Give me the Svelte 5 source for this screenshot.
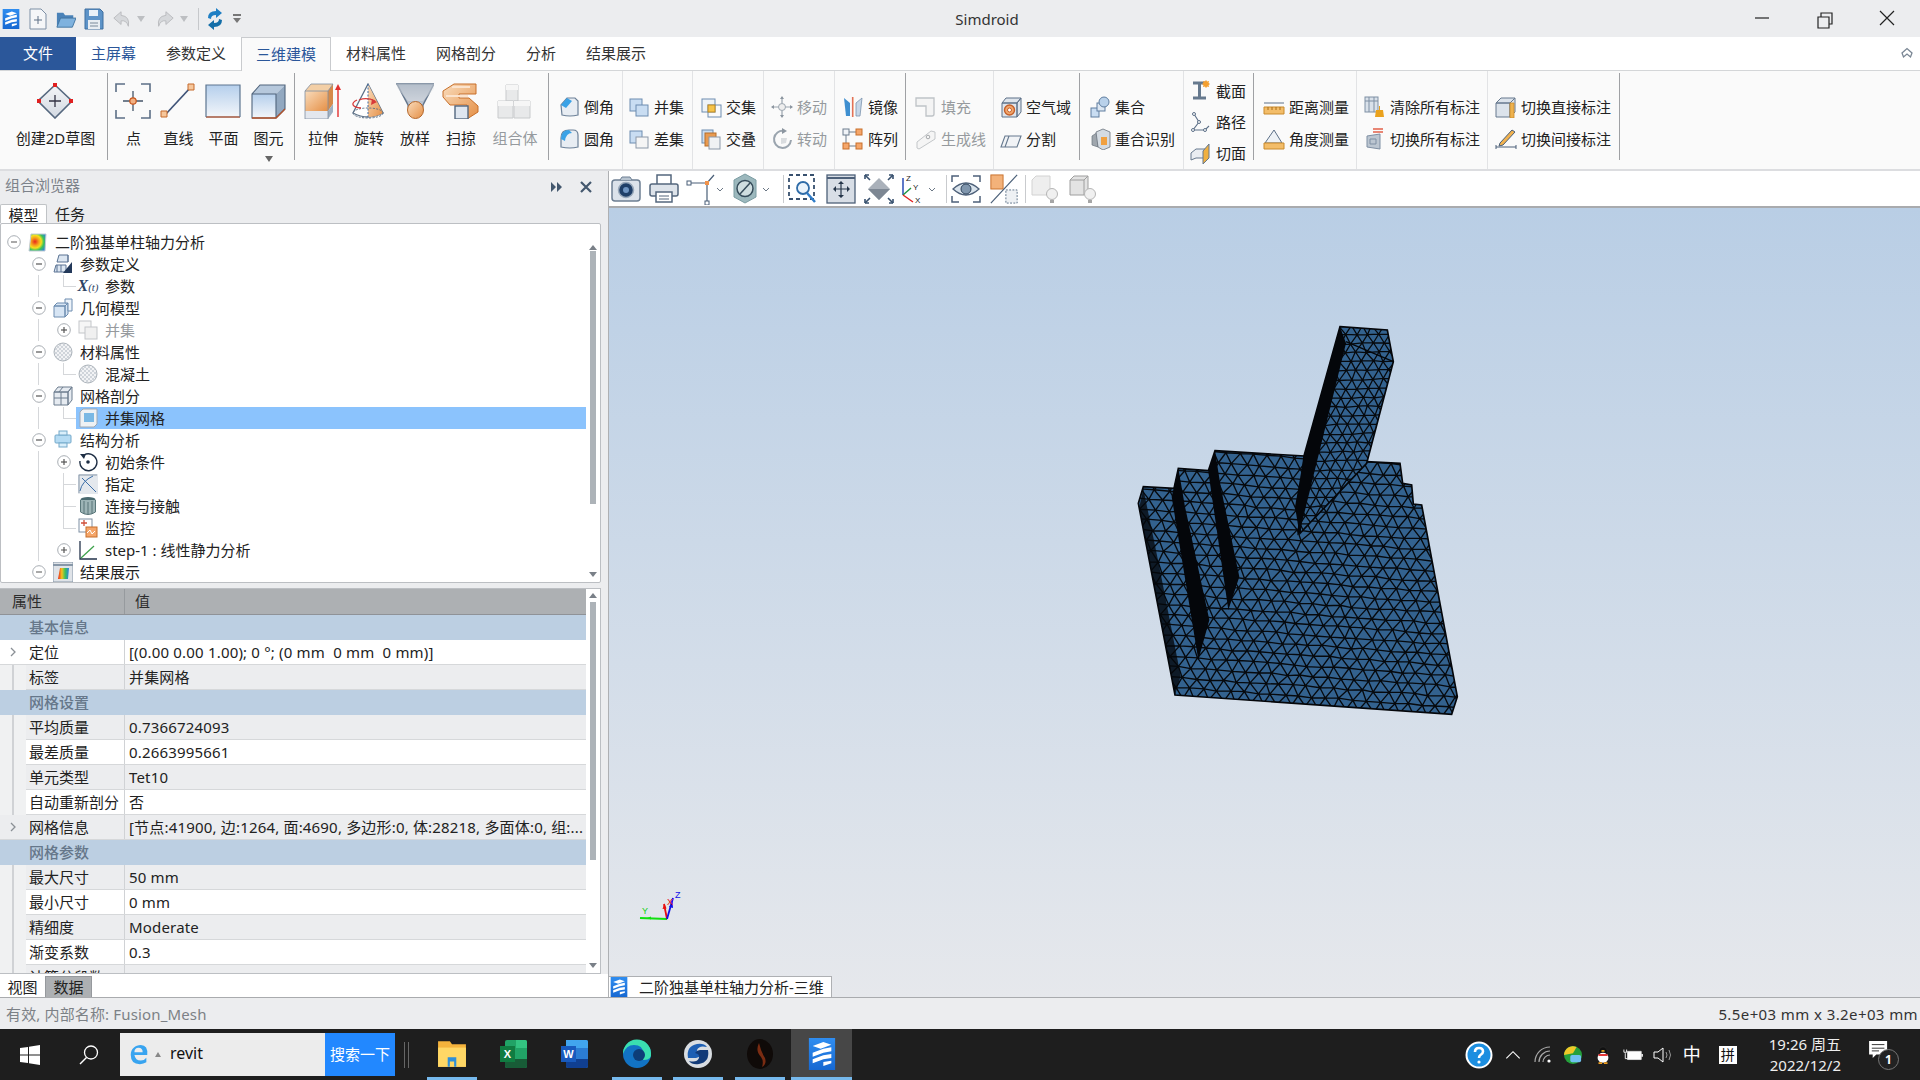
<script lang="ts">
  // large ribbon icons, 36x36
  const icons: Record<string, string> = {
    sketch: `<path d="M18 2 35 18 18 35 1 18Z" fill="url(#gSilver)" stroke="#56687f" stroke-width="1.6"/><path d="M18 12v12M12 18h12" stroke="#334" stroke-width="1.3"/><path d="M16 0h4v4h-4zM0 16h4v4H0zM32 16h4v4h-4z" fill="#e02020"/>`,
    point: `<path d="M1 9V1h9M26 1h9v8M35 27v8h-9M10 35H1v-8" fill="none" stroke="#5c6f86" stroke-width="1.6"/><path d="M18 8v20M8 18h20" stroke="#46566a" stroke-width="1.3"/><circle cx="18" cy="18" r="3.2" fill="#f2b183" stroke="#c8561c" stroke-width="1.2"/>`,
    line: `<path d="M5 32 31 4" stroke="#3f5378" stroke-width="1.7"/><path d="M1 28h6v6H1zM28 1h6v6h-6z" fill="#f6c79c" stroke="#c56a2c"/>`,
    plane: `<rect x="1" y="2" width="34" height="32" fill="url(#gPlane)"/><path d="M35 34H1" stroke="#a0553c" stroke-width="1.6"/><path d="M1 34V2h34v32" fill="none" stroke="#5c7590" stroke-width="1.2"/>`,
    prim: `<path d="M2 11h24v24H2z" fill="url(#gPlane)"/><path d="M2 11 10 2h25l-9 9z" fill="#b6c8dc"/><path d="M26 11 35 2v24l-9 9z" fill="#92a8c0"/><path d="M2 35V11L10 2h25v24l-9 9zM2 11h24v24" fill="none" stroke="#50647c" stroke-width="1.1"/><path d="M2 35h24l9-9" fill="none" stroke="#b2512a" stroke-width="1.4"/>`,
    extrude: `<path d="M1 8h23v20H1z" fill="url(#gOrange)"/><path d="M1 8 7 1h22l-5 7z" fill="#f3cfa6"/><path d="M24 8 29 1v20l-5 7z" fill="#d68a4a"/><path d="M1 28h23v8H1z" fill="#e3e7ee"/><path d="M24 28l5-7v8l-5 7z" fill="#9fb0c2"/><path d="M1 8h23v28H1zM24 8l5-7H7L1 8" fill="none" stroke="#7f8da0" stroke-width=".8"/><path d="M34 34V4" stroke="#e23030" stroke-width="1.4"/><path d="M34 1l-3 6h6z" fill="#e23030"/>`,
    revolve: `<path d="M18 1 3 30q15 8 30 0z" fill="#fff" stroke="#5c7086" stroke-width="1.3"/><path d="M18 1 33 30q-7 4-15 4z" fill="url(#gOrange)"/><path d="M18 1v33" stroke="#3a6aa5" stroke-width="1" stroke-dasharray="2 1.5"/><ellipse cx="18" cy="30" rx="15" ry="5" fill="none" stroke="#5c7086" stroke-dasharray="2 1.4"/><path d="M7 17c-6 3-6 7 4 8" fill="none" stroke="#d83a3a" stroke-width="1.3"/><path d="M9 17q8-3 16 1" fill="none" stroke="#d83a3a" stroke-width="1.3"/><path d="M27 19l-6 3 1-6z" fill="#d83a3a"/>`,
    loft: `<path d="M1 1h37L27 22a7 8 0 0 1-15 0z" fill="url(#gFunnel)" stroke="#66788e" stroke-width="1.5"/><path d="M1 1h37v5L27 18H12L1 5z" fill="#e6e8ec" opacity=".45"/><ellipse cx="19.500" cy="27" rx="8" ry="8.500" fill="url(#gOrange)" stroke="#b5682c"/>`,
    sweep: `<path d="M12 1h22v10H17v4h10l9 8v6l-11 7V22H8L1 14V8z" fill="url(#gOrange)" stroke="#c76f2a"/><path d="M4 13h22M10 4h18" stroke="#fbe3cd" stroke-width="2"/><rect x="13" y="23" width="13" height="13" fill="#dfe6ef" stroke="#53677f" stroke-width="1.4"/>`,
    combo: `<path d="M2 18h15v17H2zM10 2h12v16H10zM18 18h16v17H18z" fill="#e8e9ea" stroke="#c8cacc"/><path d="M10 2h12v5H10zM2 18h15v5H2zM18 18h16v5H18z" fill="#f6f6f6"/>`,
  };

  // small ribbon icons, 22x22
  const sIcons: Record<string, string> = {
    chamfer: `<path d="M3 9 9 2h8l3 3v14q-8 2-16 0z" fill="#e8edf3" stroke="#6c8098" stroke-width="1.2"/><path d="M3 9 9 2l5 3-6 7z" fill="#3ba2e6"/>`,
    fillet: `<path d="M3 19V10q0-8 8-8h4q5 0 5 5v12q-8 2-17 0z" fill="#e8edf3" stroke="#6c8098" stroke-width="1.2"/><path d="M3 11Q3 2 11 2l3 3q-6 0-7 8z" fill="#3ba2e6"/>`,
    union: `<rect x="2" y="3" width="12" height="12" fill="#c9ddf2" stroke="#6c8cb0"/><rect x="8" y="9" width="12" height="11" fill="#c9ddf2" stroke="#6c8cb0"/>`,
    diff: `<rect x="2" y="3" width="12" height="12" fill="#c9ddf2" stroke="#6c8cb0"/><rect x="8" y="9" width="12" height="11" fill="#f5f5f5" stroke="#8b98a8"/>`,
    inter: `<rect x="2" y="3" width="13" height="13" fill="#eef3f8" stroke="#6c8cb0"/><rect x="8" y="9" width="13" height="12" fill="none" stroke="#6c8cb0"/><rect x="8" y="9" width="7" height="7" fill="#f6c44a" stroke="#c08a1f"/>`,
    overlap: `<rect x="2" y="2" width="11" height="13" fill="#c9ddf2" stroke="#6c8cb0"/><rect x="5" y="5" width="11" height="13" fill="#e89a50" stroke="#b86e28"/><rect x="9" y="9" width="11" height="12" fill="#f0f2f4" stroke="#8b98a8"/>`,
    move: `<circle cx="11" cy="11" r="3.500" fill="#eee" stroke="#9aa4ae"/><path d="M11 1v6M11 15v6M1 11h6M15 11h6" stroke="#9aa4ae" stroke-width="1.2"/><path d="M11 0l-2 3h4zM11 22l-2-3h4zM0 11l3-2v4zM22 11l-3-2v4z" fill="#8c96a0"/>`,
    rotate: `<path d="M13 3a8.500 8.500 0 1 0 7 9" fill="none" stroke="#9aa4ae" stroke-width="2"/><path d="M11 0l5 3-5 3z" fill="#8c96a0"/><path d="M10 10h6l-1 5-5 1z" fill="#d9dcdf"/>`,
    mirror: `<path d="M2 2l6 5v13H4z" fill="#3f8fd0"/><path d="M20 2l-6 5v13h4z" fill="#c7d7e8" stroke="#7b93ad" stroke-width=".8"/><path d="M10.500 1v20" stroke="#e0705a" stroke-width="1.2"/><path d="M11.500 1v20" stroke="#f2b89e"/>`,
    array: `<path d="M5 4h12M4 5v12M5 18h12" stroke="#6d7c8d"/><rect x="1" y="1" width="6" height="6" fill="#f0f3f7" stroke="#6d7c8d"/><rect x="14" y="1" width="6" height="6" fill="#f5a66a" stroke="#c76f2a"/><rect x="1" y="15" width="6" height="6" fill="#f5a66a" stroke="#c76f2a"/><rect x="14" y="15" width="6" height="6" fill="#f5a66a" stroke="#c76f2a"/>`,
    fillShape: `<path d="M1 2h18v16a2 2 0 0 1-2 2h-6V10H1z" fill="#f4f4f4" stroke="#bfc3c7" stroke-width="1.3"/>`,
    genline: `<path d="M2 14 16 3l4 1v7L4 21l-2-1z" fill="#f5f5f5" stroke="#c3c6c9"/><circle cx="13" cy="9" r="1.800" fill="none" stroke="#a5a8ab"/>`,
    air: `<path d="M2 7h15v14H2zM2 7l4-5h15l-4 5zM17 7l4-5v14l-4 5z" fill="#dfe5ec" stroke="#5d7088"/><circle cx="9.500" cy="14" r="5" fill="#f2a66c" stroke="#c4602a" stroke-width="1.4"/><circle cx="9.500" cy="14" r="2" fill="#fff" stroke="#c4602a"/>`,
    split: `<path d="M1 19 5 8h16l-4 11zM9 8 5 19" fill="#f1f3f6" stroke="#66798e" stroke-width="1.1"/>`,
    set: `<rect x="2" y="12" width="8" height="9" fill="#c9ddf2" stroke="#5f7d9f"/><rect x="8" y="7" width="8" height="8" fill="#dde7f2" stroke="#5f7d9f"/><circle cx="15" cy="6" r="5" fill="#b9d1ea" stroke="#5f7d9f"/>`,
    coincide: `<path d="M3 8 9 4v15l-6-2z" fill="#9fa6ad" stroke="#69727c" stroke-width=".7"/><path d="M7 4l7-3 7 3v15l-7 3-5-3z" fill="#d4dbe2" stroke="#69727c" stroke-width=".8"/><path d="M12 9h6v8h-6z" fill="#f0a040"/>`,
    section: `<path d="M3 3h13M3 18h13M9.500 3v15" stroke="#66798e" stroke-width="3"/><circle cx="16" cy="4" r="3" fill="#f4a030"/><path d="M16 0v8M12 4h8M13 1l6 6M19 1l-6 6" stroke="#f4a030" stroke-width=".8"/>`,
    path: `<path d="M4 3l5 8-6 8h12l4-4" fill="none" stroke="#5d7088" stroke-width="1.1"/><g fill="#fff" stroke="#5d7088"><circle cx="4" cy="3" r="1.500"/><circle cx="9" cy="11" r="1.500"/><circle cx="3" cy="19" r="1.500"/><circle cx="15" cy="19" r="1.500"/></g>`,
    cut: `<path d="M1 11l5-4h9v9H6l-5 2z" fill="#e9edf2" stroke="#66798e"/><path d="M13 9l6-7v14l-6 6z" fill="#f0b040" stroke="#66798e"/>`,
    dist: `<path d="M1 7h20" stroke="#5d7088"/><path d="M1 11h20v7H1z" fill="#f3bd69" stroke="#c98a2c"/><path d="M5 11v3M9 11v3M13 11v3M17 11v3" stroke="#a86c18"/>`,
    angle: `<path d="M2 15 11 2l8 13z" fill="#eef2f6" stroke="#5d7088"/><path d="M1 15h20v6H1z" fill="#f3bd69" stroke="#c98a2c"/>`,
    clear: `<rect x="1" y="1" width="13" height="15" fill="#d9e1ea" stroke="#7e8fa3"/><path d="M1 5h13M5 1v15M10 1v15" stroke="#7e8fa3"/><path d="M15 10v4h-3l-1 7h9l-1-7h-3v-4z" fill="#eaa21e"/>`,
    toggleAll: `<path d="M3 8l13-2v15l-13-2z" fill="#bcc6d1" stroke="#7e8fa3"/><path d="M6 11h6v5H6z" fill="none" stroke="#7e8fa3"/><path d="M9 1h10M19 4H9" stroke="#e2604a" stroke-width="1.3"/>`,
    toggleDirect: `<path d="M1 7h14v14H1zM1 7l5-5h14l-5 5zM15 7l5-5v14l-5 5z" fill="#dce3eb" stroke="#66798e"/><path d="M15 7h4v15h-4z" fill="#eeb24e" stroke="#c98a2c" stroke-width=".8"/>`,
    toggleIndirect: `<path d="M5 15 17 2l3 2L8 17l-4 1z" fill="#f2b24e" stroke="#4a5f78"/><path d="M1 17v4M21 17v4M1 19h20" stroke="#4a5f78"/>`,
  };

  // tree icons, 20x20
  const tIcons: Record<string, string> = {
    study: `<path d="M3 2h15l-1 17H1z" fill="url(#gStudy)"/><path d="M3 2h15l-1 17H1z" fill="none" stroke="#c3cbd4"/>`,
    params: `<path d="M4 8 6 1h9v7zM1 18l2-7h10v7zM15 1v7" fill="#dce6f1" stroke="#5a7393"/><path d="M4 11v7M8 11v7" stroke="#5a7393"/><path d="M19 8v11h-9z" fill="#23395a"/>`,
    geo: `<path d="M1 8h11v11H1zM1 8l3-3h11l-3 3zM12 8l3-3v11l-3 3z" fill="#d7e5f4" stroke="#6c8cb0"/><path d="M12 1h7v12h-4V5h-3z" fill="#edf3f9" stroke="#6c8cb0"/>`,
    uni: `<rect x="1" y="1" width="12" height="12" fill="#f6f6f6" stroke="#c3c6c9"/><rect x="7" y="7" width="12" height="12" fill="#f0f0f0" stroke="#c3c6c9"/>`,
    mat: `<circle cx="10" cy="10" r="9" fill="url(#pDots)" stroke="#aeb5bc"/>`,
    mesh: `<path d="M1 6h14v13H1zM1 6l4-5h14l-4 5zM15 6l4-5v13l-4 5zM8 6v13M1 12h14M10 1 6 6" fill="#e6ebf1" stroke="#6c7c8e"/>`,
    unimesh: `<path d="M2 4 5 1h14v15l-3 3H2z" fill="#eef1f4" stroke="#9fa8b3"/><rect x="6" y="5" width="10" height="9" fill="#7ab8e4"/>`,
    struct: `<rect x="2" y="5" width="16" height="8" rx="1" fill="#b5dbf3" stroke="#74a9ca"/><rect x="6" y="1" width="8" height="4" fill="#d9eefa" stroke="#74a9ca"/><rect x="6" y="13" width="8" height="4" fill="#d9eefa" stroke="#74a9ca"/>`,
    init: `<path d="M6 3a8.500 8.500 0 1 1-4 6" fill="none" stroke="#1e2e44" stroke-width="1.4"/><path d="M2 2l6 0-2 5z" fill="#1e2e44"/><circle cx="10" cy="10" r="1.800" fill="#1e2e44"/>`,
    assign: `<rect x="0" y="0" width="20" height="20" fill="#e4e8ed"/><path d="M1 1h18M1 1v18" stroke="#8797a8"/><path d="M2 17Q4 7 15 2M4 4l14 14" fill="none" stroke="#3d6fa8"/>`,
    conn: `<ellipse cx="10" cy="3.500" rx="7.500" ry="2.500" fill="#4a6a70"/><path d="M2.500 4v12q7.500 5 15 0V4" fill="#9db4b6" stroke="#5a777a"/><path d="M6 5v13M10 6v13M14 5v13" stroke="#597578"/>`,
    monitor: `<rect x="1" y="1" width="13" height="13" fill="#fff" stroke="#7e8fa3"/><path d="M3 5h6M6 2v6" stroke="#d0503a" stroke-width="1.3"/><rect x="8" y="9" width="11" height="10" fill="#f5a66a" stroke="#c76f2a"/><path d="M9 15l3-3 2 4 3-3" fill="none" stroke="#fff"/>`,
    step: `<path d="M2 1v18h17" fill="none" stroke="#22324a" stroke-width="1.3"/><path d="M3 18 16 6" stroke="#3ca14a" stroke-width="1.2"/>`,
    result: `<rect x="0" y="0" width="20" height="20" fill="#dfe3e8" stroke="#8797a8"/><path d="M0 3h20" stroke="#8797a8" stroke-width="2"/><path d="M7 6h9l-1 11H5z" fill="url(#gHeat)"/>`,
  };

  type RItem = { label: string; icon: string; off?: boolean };
  type RGroup = { w: number; kind: string; pad: number; dark?: boolean; items: RItem[] };

  const ribbon: RGroup[] = [
    { w: 108, kind: "big", pad: 3, dark: true, items: [{ label: "创建2D草图", icon: "sketch" }] },
    { w: 187, kind: "big", pad: 3, dark: true, items: [
      { label: "点", icon: "point" }, { label: "直线", icon: "line" },
      { label: "平面", icon: "plane" }, { label: "图元", icon: "prim" } ] },
    { w: 254, kind: "big five", pad: 5, dark: true, items: [
      { label: "拉伸", icon: "extrude" }, { label: "旋转", icon: "revolve" }, { label: "放样", icon: "loft" },
      { label: "扫掠", icon: "sweep" }, { label: "组合体", icon: "combo", off: true } ] },
    { w: 74, kind: "two", pad: 9, items: [{ label: "倒角", icon: "chamfer" }, { label: "圆角", icon: "fillet" }] },
    { w: 70, kind: "two", pad: 5, items: [{ label: "并集", icon: "union" }, { label: "差集", icon: "diff" }] },
    { w: 71, kind: "two", pad: 7, items: [{ label: "交集", icon: "inter" }, { label: "交叠", icon: "overlap" }] },
    { w: 71, kind: "two", pad: 7, items: [{ label: "移动", icon: "move", off: true }, { label: "转动", icon: "rotate", off: true }] },
    { w: 71, kind: "two", pad: 7, dark: true, items: [{ label: "镜像", icon: "mirror" }, { label: "阵列", icon: "array" }] },
    { w: 88, kind: "two", pad: 9, items: [{ label: "填充", icon: "fillShape", off: true }, { label: "生成线", icon: "genline", off: true }] },
    { w: 86, kind: "two", pad: 6, dark: true, items: [{ label: "空气域", icon: "air" }, { label: "分割", icon: "split" }] },
    { w: 104, kind: "two", pad: 9, items: [{ label: "集合", icon: "set" }, { label: "重合识别", icon: "coincide" }] },
    { w: 70, kind: "three", pad: 6, dark: true, items: [{ label: "截面", icon: "section" }, { label: "路径", icon: "path" }, { label: "切面", icon: "cut" }] },
    { w: 103, kind: "two", pad: 9, items: [{ label: "距离测量", icon: "dist" }, { label: "角度测量", icon: "angle" }] },
    { w: 131, kind: "two", pad: 7, items: [{ label: "清除所有标注", icon: "clear" }, { label: "切换所有标注", icon: "toggleAll" }] },
    { w: 132, kind: "two", pad: 7, dark: true, items: [{ label: "切换直接标注", icon: "toggleDirect" }, { label: "切换间接标注", icon: "toggleIndirect" }] },
  ];

  const tabs = ["主屏幕", "参数定义", "三维建模", "材料属性", "网格剖分", "分析", "结果展示"];

  type TreeRow = { cells: string[]; icon: string; label: string; off?: boolean; sel?: boolean };
  const tree: TreeRow[] = [
    { cells: ["minus"], icon: "study", label: "二阶独基单柱轴力分析" },
    { cells: ["", "minus"], icon: "params", label: "参数定义" },
    { cells: ["", "bar", "l"], icon: "xt", label: "参数" },
    { cells: ["", "minus"], icon: "geo", label: "几何模型" },
    { cells: ["", "bar", "plus"], icon: "uni", label: "并集", off: true },
    { cells: ["", "minus"], icon: "mat", label: "材料属性" },
    { cells: ["", "bar", "l"], icon: "mat", label: "混凝土" },
    { cells: ["", "minus"], icon: "mesh", label: "网格剖分" },
    { cells: ["", "bar", "l"], icon: "unimesh", label: "并集网格", sel: true },
    { cells: ["", "minus"], icon: "struct", label: "结构分析" },
    { cells: ["", "bar", "plus"], icon: "init", label: "初始条件" },
    { cells: ["", "bar", "t"], icon: "assign", label: "指定" },
    { cells: ["", "bar", "t"], icon: "conn", label: "连接与接触" },
    { cells: ["", "bar", "l"], icon: "monitor", label: "监控" },
    { cells: ["", "bar", "plus"], icon: "step", label: "step-1 : 线性静力分析" },
    { cells: ["", "minus"], icon: "result", label: "结果展示" },
  ];

  type Prop = { k: string; v?: string; section?: boolean; alt?: boolean; arrow?: boolean };
  const props: Prop[] = [
    { k: "基本信息", section: true },
    { k: "定位", v: "[(0.00 0.00 1.00); 0 °; (0 mm  0 mm  0 mm)]", arrow: true },
    { k: "标签", v: "并集网格", alt: true },
    { k: "网格设置", section: true },
    { k: "平均质量", v: "0.7366724093", alt: true },
    { k: "最差质量", v: "0.2663995661" },
    { k: "单元类型", v: "Tet10", alt: true },
    { k: "自动重新剖分", v: "否" },
    { k: "网格信息", v: "[节点:41900, 边:1264, 面:4690, 多边形:0, 体:28218, 多面体:0, 组:...", alt: true, arrow: true },
    { k: "网格参数", section: true },
    { k: "最大尺寸", v: "50 mm", alt: true },
    { k: "最小尺寸", v: "0 mm" },
    { k: "精细度", v: "Moderate", alt: true },
    { k: "渐变系数", v: "0.3" },
    { k: "计算分段数", v: "1", alt: true },
  ];

  // jittered triangle grid, in the zoomed-up units of the mesh picture
  function meshPath(w: number, h: number, rot: number, cx: number, cy: number, span: number): string {
    let seed = 17;
    const rnd = () => {
      seed = (seed * 16807) % 2147483647;
      return seed / 2147483647 - 0.5;
    };
    const c = Math.cos(rot);
    const s = Math.sin(rot);
    const nx = Math.ceil(span / w);
    const ny = Math.ceil(span / h);
    const pts: [number, number][][] = [];
    for (let j = -ny; j <= ny; j++) {
      const row: [number, number][] = [];
      for (let i = -nx; i <= nx; i++) {
        const u = i * w + (j % 2 ? w / 2 : 0) + rnd() * w * 0.24;
        const v = j * h + rnd() * h * 0.18;
        row.push([cx + u * c - v * s, cy + u * s + v * c]);
      }
      pts.push(row);
    }
    const f = (p: [number, number]) => `${p[0].toFixed(1)} ${p[1].toFixed(1)}`;
    let d = "";
    for (let j = 0; j < pts.length; j++) {
      for (let i = 0; i < pts[j].length; i++) {
        const p = pts[j][i];
        if (i + 1 < pts[j].length) d += `M${f(p)}L${f(pts[j][i + 1])}`;
        if (j + 1 < pts.length) {
          const odd = (j - ny) % 2 !== 0;
          d += `M${f(p)}L${f(pts[j + 1][i])}`;
          const other = odd ? i + 1 : i - 1;
          if (other >= 0 && other < pts[j].length) d += `M${f(p)}L${f(pts[j + 1][other])}`;
        }
      }
    }
    return d;
  }

  const baseShape =
    "345,452 612,468 595,700 800,485 900,490 908,550 935,555 940,612 965,615 1072,1190 1055,1243 225,1185 115,610 130,560 222,565 235,505 325,512";
  const columnShape = "720,80 862,90 880,185 800,490 600,700 612,468";
  const baseMesh = meshPath(41, 31, 0.07, 640, 850, 800);
  const columnMesh = meshPath(33, 27, -0.02, 790, 400, 420);
</script>

{#snippet big(name: string)}
  <svg class="ic36" viewBox="0 0 38 36">{@html icons[name]}</svg>
{/snippet}

{#snippet expander(kind: string)}
  <svg class="exp" viewBox="0 0 14 14">
    <circle cx="7" cy="7" r="6.300" fill="#fff" stroke="#a8adb3" />
    <path d="M4 7h6" stroke="#555" stroke-width="1.200" />
    {#if kind === "plus"}<path d="M7 4v6" stroke="#555" stroke-width="1.200" />{/if}
  </svg>
{/snippet}

<svg class="defs" aria-hidden="true">
  <defs>
    <linearGradient id="gSilver" x1="0" y1="0" x2="0" y2="1"><stop offset="0" stop-color="#f4f5f7" /><stop offset="1" stop-color="#d3d9e2" /></linearGradient>
    <linearGradient id="gPlane" x1="0" y1="0" x2="0" y2="1"><stop offset="0" stop-color="#b5cfec" /><stop offset="1" stop-color="#f3f6fa" /></linearGradient>
    <linearGradient id="gOrange" x1="0" y1="0" x2="1" y2="1"><stop offset="0" stop-color="#f9dcbc" /><stop offset="1" stop-color="#e58f45" /></linearGradient>
    <linearGradient id="gFunnel" x1="0" y1="0" x2="0" y2="1"><stop offset="0" stop-color="#8b9bb0" /><stop offset="1" stop-color="#d5dae1" /></linearGradient>
    <linearGradient id="gHeat" x1="0" y1="0" x2="1" y2="0"><stop offset="0" stop-color="#e8261c" /><stop offset=".35" stop-color="#f5c21c" /><stop offset=".65" stop-color="#3cc25a" /><stop offset="1" stop-color="#2a7fe0" /></linearGradient>
    <radialGradient id="gStudy" cx=".35" cy=".45" r=".75"><stop offset="0" stop-color="#e8261c" /><stop offset=".3" stop-color="#f5a01c" /><stop offset=".5" stop-color="#f5e01c" /><stop offset=".7" stop-color="#3cc25a" /><stop offset="1" stop-color="#2a7fe0" /></radialGradient>
    <linearGradient id="gApp" x1="0" y1="0" x2="0" y2="1"><stop offset="0" stop-color="#2f8df0" /><stop offset="1" stop-color="#1668d2" /></linearGradient>
    <pattern id="pDots" width="4" height="4" patternUnits="userSpaceOnUse"><rect width="4" height="4" fill="#f2f3f5" /><circle cx="1" cy="1" r="1" fill="#c4cad1" /><circle cx="3" cy="3" r="1" fill="#c4cad1" /></pattern>
    <symbol id="appLogo" viewBox="0 0 20 24">
      <rect width="20" height="24" fill="url(#gApp)" />
      <path d="M3 6 11 3l6 2-8 3zM3 11l8-3v3l-8 3zM3 16l8-3v3l-8 3zM11 8l6-1v3l-6 1zM11 13l6-1v3l-6 1zM11 18l6-1v2l-6 2z" fill="#fff" />
    </symbol>
  </defs>
</svg>

<div class="app">
  <header class="titlebar">
    <div class="qat">
      <svg class="logo" viewBox="0 0 20 20"><use href="#appLogo" /></svg>
      <svg class="qi" viewBox="0 0 20 22"><path d="M2 1h11l5 5v15H2z" fill="#f5f6f8" stroke="#7d8fa5" /><path d="M10 8v8M6 12h8" stroke="#5d6f85" /></svg>
      <svg class="qi" viewBox="0 0 22 22"><path d="M1 4h7l2 3h9v3H6L1 20z" fill="#4a82b8" /><path d="M5 10h17l-4 10H1z" fill="#7fb2de" stroke="#3f739f" /></svg>
      <svg class="qi" viewBox="0 0 20 22"><path d="M1 1h15l3 3v17H1z" fill="#5d93c8" stroke="#3f6f9f" /><rect x="5" y="2" width="9" height="6" fill="#e8f0f8" /><rect x="4" y="12" width="12" height="9" fill="#e8edf2" /><path d="M6 15h8M6 18h8" stroke="#7a8a9a" /></svg>
      <svg class="qi" viewBox="0 0 22 22"><path d="M10 3 2 10l8 7v-4q6-1 8 6 2-11-8-12z" fill="#d6d8db" stroke="#b8babd" /></svg>
      <span class="drop"></span>
      <svg class="qi" viewBox="0 0 22 22"><path d="M12 3l8 7-8 7v-4q-6-1-8 6-2-11 8-12z" fill="#d6d8db" stroke="#b8babd" /></svg>
      <span class="drop"></span>
      <i class="qsep"></i>
      <svg class="qi" viewBox="0 0 20 22"><path d="M3 10q0-7 8-7V0l6 5-6 5V7q-5 0-5 4z" fill="#1f7fc4" /><path d="M17 12q0 7-8 7v3l-6-5 6-5v3q5 0 5-4z" fill="#136ea8" /></svg>
      <span class="more"></span>
    </div>
    <div class="title">Simdroid</div>
    <div class="winbtns">
      <svg viewBox="0 0 63 37"><path d="M26 18h14" stroke="#222" stroke-width="1.200" /></svg>
      <svg viewBox="0 0 63 37"><path d="M26 17h11v11H26zM29 17v-4h11v11h-3" fill="none" stroke="#222" stroke-width="1.200" /></svg>
      <svg viewBox="0 0 63 37"><path d="M25 11l14 14M39 11 25 25" stroke="#222" stroke-width="1.200" /></svg>
    </div>
  </header>

  <nav class="tabbar">
    <span class="file">文件</span>
    {#each tabs as t}
      <span class="tab" class:active={t === "三维建模"} class:blue={t === "主屏幕"}>{t}</span>
    {/each}
    <svg class="collapse" viewBox="0 0 12 12"><path d="M1 6l5-4.500 5 4.500-1.500 4L6 7l-3.500 3z" fill="none" stroke="#7a8694" stroke-width="1.300" /></svg>
  </nav>

  <section class="ribbon">
    {#each ribbon as g}
      <div class="group {g.kind}" class:dark={g.dark} style="width:{g.w}px;padding-left:{g.pad}px">
        {#each g.items as it}
          {#if g.kind.startsWith("big")}
            <div class="bigitem" class:wide={it.icon === "sketch"} class:combo={it.icon === "combo"} class:off={it.off}>
              {@render big(it.icon)}
              <span>{it.label}</span>
              {#if it.icon === "prim"}<i class="caret"></i>{/if}
            </div>
          {:else}
            <div class="smallitem" class:off={it.off}>
              <svg class="ic22" viewBox="0 0 22 22">{@html sIcons[it.icon]}</svg>
              <span>{it.label}</span>
            </div>
          {/if}
        {/each}
      </div>
    {/each}
  </section>

  <div class="main">
    <aside class="left">
      <div class="panelhead">
        <span>组合浏览器</span>
        <svg class="phbtn" viewBox="0 0 14 14"><path d="M1 2l5 5-5 5zM7 2l5 5-5 5z" fill="#44586e" /></svg>
        <svg class="phbtn" viewBox="0 0 14 14"><path d="M2 2l10 10M12 2 2 12" stroke="#44586e" stroke-width="2.200" /></svg>
      </div>
      <div class="ptabs">
        <span class="ptab on">模型</span>
        <span class="ptab">任务</span>
      </div>
      <div class="treebox">
        <div class="treerows">
          {#each tree as r}
            <div class="trow">
              {#each r.cells as c}
                <span class="cell {c}">
                  {#if c === "minus" || c === "plus"}{@render expander(c)}{/if}
                </span>
              {/each}
              <div class="node" class:sel={r.sel} class:off={r.off}>
                {#if r.icon === "xt"}
                  <span class="xt"><b>X</b>(t)</span>
                {:else}
                  <svg class="ic20" viewBox="0 0 20 20">{@html tIcons[r.icon]}</svg>
                {/if}
                <span class="lbl">{r.label}</span>
              </div>
            </div>
          {/each}
        </div>
        <div class="sb tree-sb"><i class="up"></i><b></b><i class="down"></i></div>
      </div>

      <div class="propbox">
        <div class="proptable">
          <div class="phead"><span class="c1">属性</span><span class="c2">值</span></div>
          {#each props as p}
            {#if p.section}
              <div class="pr section"><span>{p.k}</span></div>
            {:else}
              <div class="pr" class:alt={p.alt}>
                <span class="gut" class:arrow={p.arrow}>
                  {#if p.arrow}<svg viewBox="0 0 8 12"><path d="M2 2l4 4-4 4" fill="none" stroke="#8a8f95" stroke-width="1.300" /></svg>{/if}
                </span>
                <span class="k">{p.k}</span>
                <span class="v">{p.v}</span>
              </div>
            {/if}
          {/each}
        </div>
        <div class="sb prop-sb"><i class="up"></i><b></b><i class="down"></i></div>
      </div>

      <div class="btabs">
        <span class="btab">视图</span>
        <span class="btab on">数据</span>
      </div>
    </aside>

    <div class="right">
      <div class="toolbar">
        <svg class="tb first" viewBox="0 0 30 26"><rect x="1" y="4" width="28" height="21" rx="3" fill="#dbe2ea" stroke="#6d7f93" stroke-width="1.500" /><path d="M9 4l2-3h8l2 3" fill="#b8c4d0" stroke="#6d7f93" /><circle cx="15" cy="14" r="7.500" fill="#1f3f68" stroke="#99a9bb" stroke-width="1.500" /><circle cx="15" cy="14" r="3" fill="#6f95c2" /></svg>
        <svg class="tb" viewBox="0 0 30 30"><path d="M8 10V1h14v9" fill="#fff" stroke="#54677d" stroke-width="1.500" /><rect x="1" y="10" width="28" height="12" rx="2" fill="#dde3ea" stroke="#54677d" stroke-width="1.500" /><path d="M7 18h16v10H7z" fill="#fff" stroke="#54677d" stroke-width="1.500" /><path d="M10 22h10M10 25h10" stroke="#54677d" /></svg>
        <svg class="tb wide" viewBox="0 0 40 32"><path d="M1 10h21M21 10v20M21 10 28 2" stroke="#4a5f78" stroke-width="1.200" /><rect x="1" y="8" width="4" height="4" fill="#fff" stroke="#4a5f78" /><rect x="19" y="28" width="4" height="4" fill="#fff" stroke="#4a5f78" /><rect x="19" y="8" width="4" height="4" fill="#f0924a" /><path d="M31 15l3 3 3-3" fill="none" stroke="#6b7785" /></svg>
        <svg class="tb wide" viewBox="0 0 40 32"><path d="M13 1l11 6v17l-11 6-11-6V7z" fill="#9cb8bd" stroke="#7b9ca2" /><circle cx="13" cy="15.500" r="8" fill="#cfdee0" stroke="#364c5a" stroke-width="1.500" /><path d="M8 21l10-11" stroke="#364c5a" stroke-width="1.500" /><path d="M31 15l3 3 3-3" fill="none" stroke="#6b7785" /></svg>
        <i class="tsep s1"></i>
        <svg class="tb" viewBox="0 0 30 30"><rect x="1" y="1" width="25" height="24" fill="none" stroke="#37506e" stroke-width="1.800" stroke-dasharray="4 3" /><circle cx="15" cy="14" r="6" fill="#eaf3fb" stroke="#2f6ca8" stroke-width="1.800" /><path d="M19 19l8 9" stroke="#2f7cc8" stroke-width="2.500" /></svg>
        <svg class="tb" viewBox="0 0 30 30"><rect x="1" y="1" width="28" height="28" fill="#d8dee6" stroke="#4d6079" stroke-width="1.300" /><path d="M1 4h28" stroke="#4d6079" stroke-width="2" /><path d="M15 9v13M9 15h13" stroke="#26364a" stroke-width="1.200" /><path d="M15 7l-3 3h6zM15 24l-3-3h6zM7 15l3-3v6zM24 15l-3-3v6z" fill="#26364a" /></svg>
        <svg class="tb" viewBox="0 0 30 30"><path d="M15 4 26 15 15 26 4 15z" fill="#aab1ba" /><path d="M4 15h22L15 26z" fill="#7d8793" /><path d="M1 1l5 5M29 1l-5 5M1 29l5-5M29 29l-5-5" stroke="#37506e" stroke-width="1.600" /><path d="M1 1h4M1 1v4M29 1h-4M29 1v4M1 29h4M1 29v-4M29 29h-4M29 29v-4" stroke="#37506e" stroke-width="1.600" /></svg>
        <svg class="tb wide axes" viewBox="0 0 40 32"><path d="M5 22V5" stroke="#1a3fb0" stroke-width="1.400" /><path d="M5 22 13 15" stroke="#1e9440" stroke-width="1.400" /><path d="M5 22l10 7" stroke="#e02020" stroke-width="1.400" /><text x="8" y="8" class="axt">Z</text><text x="15" y="17" class="axt">Y</text><text x="17" y="30" class="axt">X</text><path d="M31 15l3 3 3-3" fill="none" stroke="#6b7785" /></svg>
        <i class="tsep s2"></i>
        <svg class="tb" viewBox="0 0 30 30"><path d="M1 8V2h7M22 2h7v6M29 22v6h-7M8 28H1v-6" fill="none" stroke="#4d6079" stroke-width="1.500" /><path d="M2 15q13-12 26 0-13 12-26 0z" fill="#d9e3ec" stroke="#4d6079" stroke-width="1.300" /><circle cx="15" cy="15" r="5" fill="#8096ad" stroke="#2f445c" /></svg>
        <svg class="tb" viewBox="0 0 30 32"><rect x="1" y="1" width="13" height="15" fill="#f3b27a" stroke="#c76f2a" /><rect x="17" y="17" width="12" height="14" fill="#eef1f4" stroke="#5b6f86" stroke-dasharray="2 1.500" /><path d="M29 1 1 31" stroke="#4a5f78" stroke-width="1.300" /></svg>
        <i class="tsep s3"></i>
        <svg class="tb" viewBox="0 0 30 30"><path d="M2 6l4-4h14v16l-4 3H2z" fill="#eeeeee" stroke="#d2d2d2" /><circle cx="22" cy="20" r="5.500" fill="#f0f0f0" stroke="#b5b5b5" /><path d="M20 26h4v3h-4z" fill="#a6a6a6" /></svg>
        <svg class="tb" viewBox="0 0 30 30"><path d="M2 6l4-4h14v16l-4 3H2z" fill="#e3e3e3" stroke="#9e9e9e" /><path d="M2 6h14v15M16 6l4-4" fill="none" stroke="#9e9e9e" /><circle cx="22" cy="20" r="5.500" fill="#f0f0f0" stroke="#b5b5b5" /><path d="M20 26h4v3h-4z" fill="#a6a6a6" /></svg>
      </div>

      <div class="viewport">
        <svg class="model" viewBox="0 0 1200 1320">
          <defs>
            <clipPath id="clipBase"><polygon points={baseShape} /></clipPath>
            <clipPath id="clipColumn"><polygon points={columnShape} /></clipPath>
          </defs>
          <polygon points={baseShape} fill="#33628f" />
          <path d={baseMesh} clip-path="url(#clipBase)" fill="none" stroke="#06090d" stroke-width="4" />
          <polygon points={baseShape} fill="none" stroke="#04060a" stroke-width="5" />
          <polygon points="118,620 225,1185 242,1128 178,800 130,566" fill="#04060a" opacity=".78" />
          <polygon points="235,505 215,590 295,1080 328,960 255,620" fill="#04060a" />
          <polygon points="345,452 325,515 385,930 418,830 362,560" fill="#04060a" />
          <polygon points={columnShape} fill="#33628f" />
          <path d={columnMesh} clip-path="url(#clipColumn)" fill="none" stroke="#06090d" stroke-width="3.800" />
          <polygon points={columnShape} fill="none" stroke="#04060a" stroke-width="5" />
          <polygon points="720,80 738,130 598,700 585,620 612,468" fill="#04060a" />
          <path d="M738 125 880 185" stroke="#04060a" stroke-width="4" />
        </svg>

        <svg class="triad" viewBox="0 0 48 36">
          <path d="M32 27 5 26" stroke="#10e010" stroke-width="1.800" />
          <path d="M16 24.500v3l-4-1.500z" fill="#10e010" />
          <path d="M32 27 29 12" stroke="#e81010" stroke-width="1.800" />
          <path d="M27.500 17l4-.5-2-5z" fill="#e81010" />
          <path d="M32 27 38 6" stroke="#1010e8" stroke-width="1.800" />
          <path d="M34 15l4 1-.5-6z" fill="#1010e8" />
          <text x="40" y="6" class="zt">Z</text>
          <text x="7" y="22" class="yt">Y</text>
          <text x="32" y="13" class="xt2">X</text>
        </svg>

        <div class="doctab">
          <svg viewBox="0 0 20 20"><use href="#appLogo" /></svg>
          <span>二阶独基单柱轴力分析-三维</span>
        </div>
      </div>
    </div>
  </div>

  <footer class="status">
    <span class="msg">有效, 内部名称: Fusion_Mesh</span>
    <span class="dims">5.5e+03 mm x 3.2e+03 mm</span>
  </footer>

  <div class="taskbar">
    <svg class="win" viewBox="0 0 20 20"><path d="M0 3l8-1v7.500H0zM9 1.800 20 0v9.500H9zM0 10.500h8V18l-8-1zM9 10.500h11V20L9 18.300z" fill="#fff" /></svg>
    <svg class="find" viewBox="0 0 22 22"><circle cx="13" cy="8.500" r="6.500" fill="none" stroke="#fff" stroke-width="1.300" /><path d="M8.500 13.500 2 20" stroke="#fff" stroke-width="1.500" /></svg>
    <div class="searchbox">
      <svg viewBox="0 0 24 26"><path d="M21 13H7q1 6 7 6 4 0 6-3v5q-3 2-7 2-10 0-10-10C3 6 8 2 14 2q8 0 7 11zM7 10h9q0-5-4.500-5T7 10z" fill="#38a4f0" /></svg>
      <i class="tri"></i>
      <span class="q">revit</span>
      <span class="go">搜索一下</span>
    </div>
    <i class="grip"></i>
    <div class="apps">
      <span class="app-i on">
        <svg viewBox="0 0 28 26"><path d="M1 1h11l2 3h13v21H1z" fill="#f5b33c" /><path d="M1 7h26v18H1z" fill="#ffd765" /><path d="M10 16h8v9h-2v-5h-4v5h-2z" fill="#2f8fd8" /></svg>
      </span>
      <span class="app-i">
        <svg viewBox="0 0 28 30"><rect x="5" y="1" width="22" height="28" rx="2" fill="#21a366" /><path d="M16 1h9a2 2 0 0 1 2 2v6H16z" fill="#33c481" /><path d="M5 20h22v7a2 2 0 0 1-2 2H7a2 2 0 0 1-2-2z" fill="#185c37" /><rect x="0" y="7" width="15" height="16" fill="#107c41" /><text x="7.500" y="19" class="lt">X</text></svg>
      </span>
      <span class="app-i">
        <svg viewBox="0 0 28 30"><rect x="5" y="1" width="22" height="28" rx="2" fill="#2b7cd3" /><path d="M5 1h20a2 2 0 0 1 2 2v6H5z" fill="#41a5ee" /><path d="M5 20h22v7a2 2 0 0 1-2 2H7a2 2 0 0 1-2-2z" fill="#103f91" /><rect x="0" y="7" width="15" height="16" fill="#185abd" /><text x="7.500" y="19" class="lt">W</text></svg>
      </span>
      <span class="app-i on">
        <svg viewBox="0 0 30 30"><circle cx="15" cy="15" r="14" fill="#1273c4" /><path d="M1 15a14 14 0 0 1 28-1q1 7-7 7-5 0-6-3 5 0 5-4 0-8-9-8Q4 6 1 15z" fill="#3adfb0" /><circle cx="17" cy="16" r="6" fill="#0d3d78" /></svg>
      </span>
      <span class="app-i on">
        <svg viewBox="0 0 30 30"><circle cx="15" cy="15" r="14" fill="#d9dde2" /><path d="M5 19Q3 7 14 5q7-1 10 3-8-2-10 3-1 4 4 5-2 3-5 3-5 0-8 0z" fill="#1d5fb4" /><path d="M25 11q2 12-9 14-7 1-10-3 8 2 10-3 1-4-4-5 2-3 5-3 5 0 8 0z" fill="#123a78" /></svg>
      </span>
      <span class="app-i on">
        <svg viewBox="0 0 30 30"><ellipse cx="15" cy="15" rx="13" ry="15" fill="#0f0a08" /><path d="M14 4q-4 8 2 14 3 4 1 10 5-3 3-9-4-6-6-15z" fill="#7a2c12" /></svg>
      </span>
      <span class="app-i cur on">
        <svg viewBox="0 0 20 24" class="tall"><use href="#appLogo" /></svg>
      </span>
    </div>
    <div class="tray">
      <svg class="t-help" viewBox="0 0 28 28"><circle cx="14" cy="14" r="12.500" fill="#1b8ee0" stroke="#fff" stroke-width="2" /><path d="M10 11q0-4 4-4t4 3.500q0 2-2.500 3.500-1.500 1-1.500 3" fill="none" stroke="#fff" stroke-width="2.600" /><circle cx="14" cy="21" r="1.600" fill="#fff" /></svg>
      <svg class="t-chev" viewBox="0 0 18 12"><path d="M1 10 9 2l8 8" fill="none" stroke="#fff" stroke-width="1.300" /></svg>
      <svg class="t-i" viewBox="0 0 18 18"><path d="M1 16A15 15 0 0 1 16 1M5 16A11 11 0 0 1 16 5M9 16a7 7 0 0 1 7-7" fill="none" stroke="#aaa" stroke-width="1.200" /><circle cx="15" cy="15" r="1.600" fill="#fff" /></svg>
      <svg class="t-i" viewBox="0 0 20 20"><circle cx="10" cy="10" r="10" fill="#25a03c" /><path d="M0 10a10 10 0 0 1 14-9l-4 7z" fill="#f0c828" /><rect x="7" y="10" width="12" height="8" rx="2" fill="#6fc0f0" /></svg>
      <svg class="t-i" viewBox="0 0 18 20"><ellipse cx="9" cy="7" rx="5" ry="6" fill="#111" stroke="#333" stroke-width=".5" /><ellipse cx="9" cy="13" rx="6" ry="5.500" fill="#fff" /><path d="M4 9h10v2H4z" fill="#e02020" /><ellipse cx="9" cy="5.500" rx="2" ry="1" fill="#f0b020" /><path d="M4 18h4v2H4zM10 18h4v2h-4z" fill="#f0a020" /></svg>
      <svg class="t-i" viewBox="0 0 22 14"><path d="M5 3h15v9H5z" fill="#fff" stroke="#ddd" /><path d="M1 1v3h3V1M2.500 5v6H5" fill="none" stroke="#fff" /><path d="M20 6h2v3h-2z" fill="#ddd" /></svg>
      <svg class="t-i" viewBox="0 0 20 18"><path d="M1 6h4l5-4v14l-5-4H1z" fill="none" stroke="#fff" /><path d="M13 6q2 3 0 6M16 4q3 5 0 10" fill="none" stroke="#999" /></svg>
      <span class="t-zh">中</span>
      <span class="t-py">拼</span>
      <span class="clock"><span>19:26 周五</span><span>2022/12/2</span></span>
      <span class="notice">
        <svg viewBox="0 0 22 20"><path d="M0 0h20v15H8l-4 4v-4H0z" fill="#fff" /><path d="M3 4h14M3 8h14M3 11h8" stroke="#222" /></svg>
        <b>1</b>
      </span>
    </div>
  </div>
</div>

<style>
  :global(body) {
    margin: 0;
    background: #ecedef;
  }
  .defs {
    display: block;
    width: 0;
    height: 0;
  }
  .app {
    width: 1920px;
    height: 1080px;
    display: flex;
    flex-direction: column;
    overflow: hidden;
    font-family: "Noto Sans", "Noto Sans CJK SC", sans-serif;
    font-size: 15px;
    color: #222;
    line-height: 1.2;
  }

  .titlebar {
    height: 37px;
    flex: none;
    display: flex;
    align-items: center;
    background: #ecedef;
  }
  .qat {
    width: 954px;
    display: flex;
    align-items: center;
    padding-left: 1px;
    box-sizing: border-box;
  }
  .logo {
    width: 20px;
    height: 20px;
    margin-right: 7px;
  }
  .qi {
    width: 20px;
    height: 22px;
    margin-right: 8px;
  }
  .drop {
    width: 0;
    height: 0;
    border: 4px solid transparent;
    border-top: 6px solid #bdbfc2;
    border-bottom: 0;
    margin: 0 10px 0 -3px;
  }
  .qsep {
    width: 1px;
    height: 22px;
    background: #c6c8cb;
    margin-right: 6px;
  }
  .more {
    width: 8px;
    height: 8px;
    margin-left: 0;
    border-top: 2px solid #777;
    position: relative;
  }
  .more::after {
    content: "";
    position: absolute;
    left: 0;
    top: 2px;
    border: 4px solid transparent;
    border-top: 5px solid #777;
    border-bottom: 0;
  }
  .title {
    width: 66px;
    white-space: nowrap;
    text-align: center;
    font-size: 15px;
    color: #333;
  }
  .winbtns {
    margin-left: auto;
    padding-right: 2px;
    display: flex;
  }
  .winbtns svg {
    width: 63px;
    height: 37px;
    display: block;
  }

  .tabbar {
    height: 33px;
    flex: none;
    display: flex;
    align-items: stretch;
    background: #fff;
    box-sizing: border-box;
  }
  .file {
    width: 76px;
    background: #2b579a;
    color: #fff;
    text-align: center;
    line-height: 32px;
  }
  .tab {
    padding: 0 15px;
    line-height: 32px;
    color: #333;
    margin-left: 0;
  }
  .tab.blue {
    color: #2b579a;
  }
  .tab.active {
    color: #2b579a;
    background: #fafafa;
    border: 1px solid #c9cbce;
    border-bottom: 0;
    padding: 0 14px;
    margin-bottom: -1px;
    position: relative;
    z-index: 1;
  }
  .collapse {
    width: 12px;
    height: 12px;
    margin: 10px 7px 0 auto;
  }

  .ribbon {
    height: 101px;
    flex: none;
    box-sizing: border-box;
    display: flex;
    background: #fafafa;
    border-top: 1px solid #d4d6d8;
    border-bottom: 2px solid #dcdde0;
  }
  .group {
    box-sizing: border-box;
    flex: none;
    display: flex;
    position: relative;
    border-right: 1px solid #e2e3e5;
  }
  .group.dark {
    border-right-color: transparent;
  }
  .group.dark::after {
    content: "";
    position: absolute;
    right: -1px;
    top: 2px;
    bottom: 9px;
    width: 1px;
    background: #9fa1a4;
  }
  .group.two,
  .group.three {
    flex-direction: column;
  }
  .group.two {
    padding-top: 20px;
  }
  .group.three {
    padding-top: 4.5px;
  }
  .bigitem {
    width: 45px;
    flex: none;
    display: flex;
    flex-direction: column;
    align-items: center;
    padding-top: 12px;
    position: relative;
  }
  .five .bigitem {
    width: 46px;
  }
  .bigitem.wide {
    width: 105px;
  }
  .five .bigitem.combo {
    width: 62px;
  }
  .bigitem span {
    margin-top: 10px;
    white-space: nowrap;
  }
  .ic36 {
    width: 38px;
    height: 36px;
    display: block;
  }
  .off,
  .off span {
    color: #969a9e;
  }
  .caret {
    width: 0;
    height: 0;
    margin-top: 9px;
    border: 4px solid transparent;
    border-top: 6px solid #666;
    border-bottom: 0;
  }
  .smallitem {
    height: 32px;
    display: flex;
    align-items: center;
    gap: 4px;
    white-space: nowrap;
  }
  .ic22 {
    width: 22px;
    height: 22px;
    flex: none;
  }

  .main {
    flex: 1;
    min-height: 0;
    display: flex;
  }
  .left {
    width: 608px;
    flex: none;
    display: flex;
    flex-direction: column;
    background: #ecedef;
    box-sizing: border-box;
  }
  .panelhead {
    height: 33px;
    flex: none;
    display: flex;
    align-items: center;
    gap: 15px;
    padding: 0 15px 2px 5px;
    box-sizing: border-box;
    color: #7c828a;
  }
  .panelhead span {
    margin-right: auto;
    margin-top: -3px;
  }
  .phbtn {
    width: 14px;
    height: 14px;
  }
  .ptabs {
    height: 19px;
    flex: none;
    display: flex;
    align-items: flex-end;
  }
  .ptab {
    text-align: center;
    line-height: 18px;
    height: 19px;
    padding-top: 1px;
    box-sizing: border-box;
  }
  .ptab.on {
    width: 47px;
    background: #fff;
    border: 1px solid #c0c3c6;
    border-bottom: 0;
    border-radius: 2px 2px 0 0;
    margin-right: 8px;
  }
  .ptab:not(.on) {
    width: 30px;
  }
  .treebox {
    height: 360px;
    width: 601px;
    flex: none;
    box-sizing: border-box;
    background: #fff;
    border: 1px solid #bcbfc3;
    border-radius: 2px;
    display: flex;
    overflow: hidden;
  }
  .treerows {
    flex: 1;
    padding-top: 7px;
    overflow: hidden;
  }
  .trow {
    height: 22px;
    display: flex;
    align-items: stretch;
  }
  .cell {
    width: 25px;
    flex: none;
    display: flex;
    align-items: center;
    justify-content: center;
    background-repeat: no-repeat;
  }
  .cell.bar {
    background-image: linear-gradient(#d5d7da, #d5d7da);
    background-size: 1px 100%;
    background-position: 12px 0;
  }
  .cell.l {
    background-image: linear-gradient(#d5d7da, #d5d7da), linear-gradient(#d5d7da, #d5d7da);
    background-size: 1px 50%, 13px 1px;
    background-position: 12px 0, 12px 11px;
  }
  .cell.t {
    background-image: linear-gradient(#d5d7da, #d5d7da), linear-gradient(#d5d7da, #d5d7da);
    background-size: 1px 100%, 13px 1px;
    background-position: 12px 0, 12px 11px;
  }
  .exp {
    width: 14px;
    height: 14px;
  }
  .node {
    flex: 1;
    display: flex;
    align-items: center;
    gap: 5px;
    min-width: 0;
    white-space: nowrap;
  }
  .node.sel {
    background: #8bc3fd;
  }
  .ic20 {
    width: 20px;
    height: 20px;
    flex: none;
    margin-left: 2px;
    margin-right: 2px;
  }
  .xt {
    width: 24px;
    flex: none;
    font-family: "Liberation Serif", serif;
    font-style: italic;
    font-size: 11px;
    color: #2e4464;
    text-align: center;
    white-space: nowrap;
  }
  .xt b {
    font-size: 16px;
  }
  .sb {
    width: 14px;
    flex: none;
    display: flex;
    flex-direction: column;
    align-items: center;
    box-sizing: border-box;
    position: relative;
  }
  .sb b {
    width: 6px;
    background: #adb3b8;
    display: block;
  }
  .sb i {
    width: 0;
    height: 0;
    border: 4px solid transparent;
    flex: none;
  }
  .sb i.up {
    border-bottom: 5px solid #7a8088;
    border-top: 0;
  }
  .sb i.down {
    border-top: 5px solid #7a8088;
    border-bottom: 0;
    margin-top: auto;
  }
  .tree-sb {
    padding: 21px 0 5px;
  }
  .tree-sb b {
    height: 253px;
    margin-top: 1px;
  }
  .prop-sb {
    padding: 4px 0 5px;
  }
  .prop-sb b {
    height: 258px;
    margin-top: 4px;
  }

  .propbox {
    height: 386px;
    width: 601px;
    flex: none;
    margin-top: 5px;
    box-sizing: border-box;
    background: #fff;
    border: 1px solid #bcbfc3;
    border-left: 0;
    display: flex;
    overflow: hidden;
  }
  .proptable {
    flex: 1;
    min-width: 0;
    overflow: hidden;
  }
  .phead {
    height: 26px;
    display: flex;
    background: #adb0b3;
    border-bottom: 1px solid #8f9297;
    box-sizing: border-box;
    line-height: 24px;
    color: #2c2c2c;
  }
  .c1 {
    width: 125px;
    padding-left: 12px;
    box-sizing: border-box;
    border-right: 1px solid #969a9e;
  }
  .c2 {
    padding-left: 10px;
  }
  .pr {
    height: 25px;
    display: flex;
    align-items: center;
    background: #fff;
    box-sizing: border-box;
    border-bottom: 1px solid #d6d8da;
    white-space: nowrap;
  }
  .pr.alt {
    background: #ecedef;
  }
  .pr.section {
    background: #bccfe2;
    border-bottom: 0;
    padding-left: 29px;
    padding-bottom: 2px;
    color: #66778a;
    font-weight: 500;
  }
  .gut {
    width: 26px;
    height: 25px;
    flex: none;
    background: #f0f1f2 linear-gradient(#d0d2d5, #d0d2d5) no-repeat 12px 0 / 2px 100%;
    position: relative;
  }
  .gut.arrow {
    background: none;
    display: flex;
    align-items: center;
    justify-content: center;
    padding-right: 1px;
    box-sizing: border-box;
  }
  .gut svg {
    width: 8px;
    height: 12px;
  }
  .k {
    width: 99px;
    flex: none;
    padding-left: 3px;
    box-sizing: border-box;
    height: 100%;
    line-height: 24px;
    border-right: 1px solid #d0d2d5;
    overflow: hidden;
  }
  .v {
    padding-left: 4px;
    overflow: hidden;
    white-space: pre;
    letter-spacing: 0.18px;
  }
  .btabs {
    height: 23px;
    flex: none;
    display: flex;
    align-items: flex-end;
    background: #fff;
  }
  .btab {
    width: 45px;
    text-align: center;
    line-height: 20px;
  }
  .btab.on {
    width: 47px;
    background: #adb0b3;
    box-sizing: border-box;
    border: 1px solid #96999d;
    border-bottom: 0;
  }

  .right {
    flex: 1;
    min-width: 0;
    display: flex;
    flex-direction: column;
    border-left: 1px solid #aeb0b3;
  }
  .toolbar {
    height: 37px;
    flex: none;
    box-sizing: border-box;
    background: #fff;
    border-bottom: 2px solid #a9abae;
    display: flex;
    align-items: center;
  }
  .tb {
    width: 30px;
    height: 30px;
    margin: 0 4px;
    flex: none;
  }
  .tb.first {
    margin-left: 2px;
  }
  .tb.wide {
    width: 44px;
    height: 32px;
    margin: 0 1px;
  }
  .tb.axes {
    margin-left: -2px;
  }
  .tsep {
    width: 1px;
    height: 28px;
    background: #c9cbce;
    flex: none;
  }
  .s1 {
    margin-left: 8px;
  }
  .s2 {
    margin-left: 5px;
  }
  .s3 {
    margin-left: 2px;
  }
  .axt {
    font-size: 8px;
    fill: #222;
    font-family: "Liberation Sans", sans-serif;
  }
  .viewport {
    flex: 1;
    min-height: 0;
    position: relative;
    background: linear-gradient(#b9cee5, #e6e8ec);
  }
  .model {
    position: absolute;
    left: 491px;
    top: 92px;
    width: 400px;
    height: 440px;
  }
  .triad {
    position: absolute;
    left: 26px;
    top: 684px;
    width: 48px;
    height: 36px;
  }
  .zt,
  .yt,
  .xt2 {
    font-size: 9px;
    font-family: "Liberation Sans", sans-serif;
  }
  .zt {
    fill: #1010e8;
  }
  .yt {
    fill: #10d010;
  }
  .xt2 {
    fill: #e81010;
  }
  .doctab {
    position: absolute;
    left: 0;
    bottom: 0;
    width: 223px;
    height: 21px;
    background: #fff;
    border: 1px solid #aeb0b3;
    border-left: 0;
    border-bottom: 0;
    box-sizing: border-box;
    display: flex;
    align-items: center;
    gap: 10px;
    white-space: nowrap;
  }
  .doctab svg {
    width: 20px;
    height: 20px;
    flex: none;
  }

  .status {
    height: 32px;
    flex: none;
    box-sizing: border-box;
    background: #ecedef;
    border-top: 1px solid #a9abae;
    display: flex;
    align-items: center;
    justify-content: space-between;
    padding: 0 2px 0 6px;
    color: #7c8186;
  }
  .msg {
    letter-spacing: 0.15px;
  }
  .dims {
    color: #333;
    letter-spacing: 0.4px;
  }

  .taskbar {
    height: 51px;
    flex: none;
    background: #1e1e1e;
    display: flex;
    align-items: center;
    position: relative;
    color: #fff;
  }
  .win {
    width: 20px;
    height: 20px;
    margin-left: 20px;
    flex: none;
  }
  .find {
    width: 22px;
    height: 22px;
    margin-left: 38px;
    flex: none;
  }
  .searchbox {
    width: 275px;
    height: 43px;
    margin-left: 20px;
    background: #ececec;
    display: flex;
    align-items: center;
    color: #111;
    flex: none;
  }
  .searchbox svg {
    width: 22px;
    height: 24px;
    margin-left: 8px;
  }
  .tri {
    width: 0;
    height: 0;
    border: 3px solid transparent;
    border-bottom: 5px solid #888;
    border-top: 0;
    margin: 0 9px 0 5px;
  }
  .q {
    font-size: 16px;
    margin-bottom: 1px;
  }
  .go {
    margin-left: auto;
    width: 70px;
    height: 43px;
    line-height: 43px;
    background: #2288ff;
    color: #fff;
    text-align: center;
    white-space: nowrap;
  }
  .grip {
    width: 3px;
    height: 26px;
    margin-left: 9px;
    border-left: 1px solid #666;
    border-right: 1px solid #666;
    flex: none;
  }
  .apps {
    display: flex;
    margin-left: 18px;
    height: 51px;
  }
  .app-i {
    width: 50px;
    margin-right: 11.5px;
    height: 51px;
    display: flex;
    align-items: center;
    justify-content: center;
    box-sizing: border-box;
    border-bottom: 3px solid transparent;
    flex: none;
  }
  .app-i.on {
    border-bottom-color: #76b9ed;
  }
  .app-i.cur {
    width: 61px;
    margin-left: -5px;
    margin-right: 0;
    background: #474747;
  }
  .app-i svg {
    width: 30px;
    height: 30px;
    margin-top: 2px;
  }
  .app-i svg.tall {
    width: 28px;
    height: 32px;
  }
  .lt {
    font-size: 11px;
    font-weight: 700;
    fill: #fff;
    text-anchor: middle;
    font-family: "Liberation Sans", sans-serif;
  }
  .tray {
    margin-left: auto;
    display: flex;
    align-items: center;
    height: 51px;
  }
  .t-help {
    width: 28px;
    height: 28px;
    margin-right: 12px;
  }
  .t-chev {
    width: 16px;
    height: 10px;
    margin-right: 12px;
  }
  .t-i {
    width: 20px;
    height: 18px;
    margin-right: 10px;
  }
  .t-zh {
    font-size: 18px;
    margin-left: 0;
    margin-right: 18px;
  }
  .t-py {
    width: 18px;
    height: 18px;
    background: #fff;
    color: #111;
    font-size: 14px;
    line-height: 18px;
    text-align: center;
    margin-right: 32px;
  }
  .clock {
    display: flex;
    flex-direction: column;
    align-items: flex-end;
    font-size: 15px;
    line-height: 21px;
    color: #eee;
    white-space: nowrap;
  }
  .notice {
    width: 32px;
    height: 30px;
    margin: 0 19px 0 28px;
    position: relative;
    display: block;
  }
  .notice svg {
    width: 20px;
    height: 18px;
    display: block;
    margin-top: 1px;
  }
  .notice b {
    position: absolute;
    left: 9px;
    top: 9px;
    width: 19px;
    height: 19px;
    border-radius: 50%;
    background: #222;
    border: 1px solid #777;
    font-size: 12px;
    line-height: 19px;
    text-align: center;
  }
</style>
